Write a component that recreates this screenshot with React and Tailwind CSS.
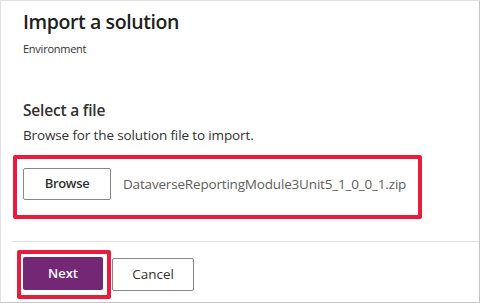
export default function App() {
  return (
    <div
      className="w-[480px] h-[303px] bg-white border-t border-l border-t-[#e2e2e2] border-l-[#e2e2e2] border-r border-b border-r-[#c4c4c4] border-b-[#c4c4c4] overflow-hidden"
      style={{ fontFamily: '"Open Sans", "Noto Sans", sans-serif' }}
    >
      <div className="pl-[22px]">
        <h1 className="mt-[7px] text-[19.5px] leading-[28px] tracking-[-0.4px] font-semibold text-[#201f1e]">Import a solution</h1>
        <div className="mt-[5px] text-[11px] leading-[16px] tracking-[-0.25px] text-[#323130]">Environment</div>
        <h2 className="mt-[42px] text-[15.5px] leading-[22px] tracking-[-0.2px] font-semibold text-[#323130]">Select a file</h2>
        <p className="mt-[4px] text-[13.5px] leading-[20px] tracking-[-0.13px] text-[#323130]">Browse for the solution file to import.</p>
      </div>
      <div className="ml-[12px] mt-[10px] w-[409px] h-[64px] border-4 border-[#e81c3c] rounded-[2px] pl-[6px] pt-[9px] flex items-start">
        <button className="w-[88px] h-[32px] border border-[#8a8886] rounded-[2px] bg-white text-[13px] tracking-[-0.3px] font-semibold text-[#323130] flex items-center justify-center">
          Browse
        </button>
        <span className="ml-[12px] mt-[6px] text-[13.5px] leading-[20px] tracking-[-0.18px] text-[#605e5c]">DataverseReportingModule3Unit5_1_0_0_1.zip</span>
      </div>
      <div className="ml-[11px] mt-[22px] h-px bg-[#e1e1e1]" />
      <div className="ml-[16px] mt-[8px] flex items-start">
        <div className="w-[94px] h-[49px] border-4 border-[#e81c3c] rounded-[2px] pl-[2px] pt-[3px]">
          <button className="w-[80px] h-[33px] bg-[#742774] rounded-[2px] text-white text-[13px] font-semibold flex items-center justify-center">
            Next
          </button>
        </div>
        <button className="ml-[1px] mt-[8px] w-[82px] h-[33px] border border-[#8a8886] rounded-[2px] bg-white text-[13.5px] text-[#323130] flex items-center justify-center">
          Cancel
        </button>
      </div>
    </div>
  );
}
